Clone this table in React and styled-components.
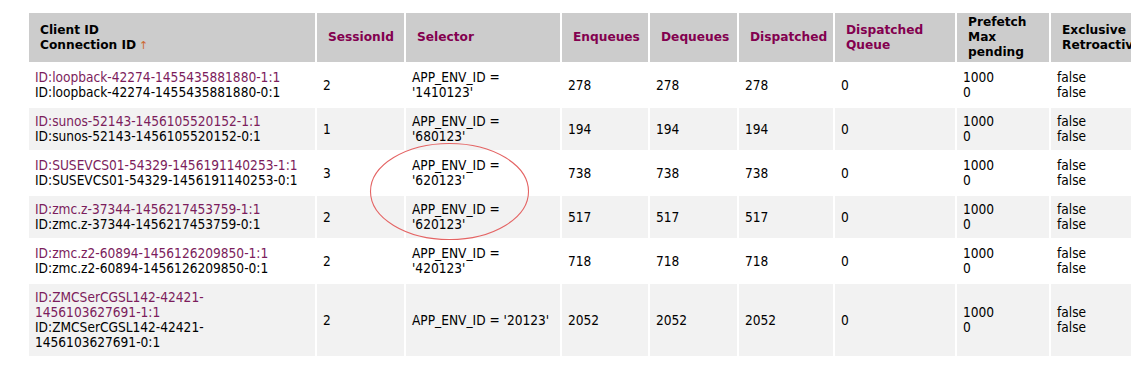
import React from 'react'
import styled, { createGlobalStyle } from 'styled-components'

const GlobalStyle = createGlobalStyle`
  html, body {
    margin: 0;
    padding: 0;
    background: #fff;
    overflow: hidden;
  }
`

const Page = styled.div`
  position: relative;
  padding: 11px 0 0 27px;
  font-family: 'DejaVu Sans Condensed', 'DejaVu Sans', sans-serif;
  font-size: 13.6px;
  color: #000;
`

const Table = styled.table`
  table-layout: fixed;
  width: ${p => p.$width}px;
  border-collapse: separate;
  border-spacing: 2px;
  margin: 0;
`

const Th = styled.th`
  background: #cccccc;
  text-align: left;
  vertical-align: middle;
  padding: 2px 4px 2px 11px;
  line-height: 15px;
  font-family: 'DejaVu Sans', sans-serif;
  font-size: 12.2px;
  font-weight: bold;
  color: ${p => (p.$sortable ? '#83004f' : '#000')};
  white-space: nowrap;
  overflow: hidden;
`

const SortArrow = styled.span`
  color: #cc6a33;
  font-weight: normal;
  font-size: 11px;
  margin-left: 3px;
`

const Row = styled.tr`
  background: ${p => (p.$odd ? '#f2f2f2' : '#fff')};
`

const Td = styled.td`
  padding: 6px 4px 6px 6px;
  line-height: 15px;
  vertical-align: middle;
  white-space: nowrap;
`

const Link = styled.span`
  color: #7c1d5c;
`

const Mark = styled.svg`
  position: absolute;
  left: 368px;
  top: 141px;
  pointer-events: none;
`

const columns = [
  { w: 286, label: ['Client ID', 'Connection ID'], sorted: true },
  { w: 87, label: ['SessionId'], sortable: true },
  { w: 154, label: ['Selector'], sortable: true },
  { w: 86, label: ['Enqueues'], sortable: true },
  { w: 87, label: ['Dequeues'], sortable: true },
  { w: 94, label: ['Dispatched'], sortable: true },
  { w: 120, label: ['Dispatched', 'Queue'], sortable: true },
  { w: 92, label: ['Prefetch', 'Max', 'pending'] },
  { w: 110, label: ['Exclusive', 'Retroactive'] },
]

const tableWidth = columns.reduce((s, c) => s + c.w, 0) + 2 * (columns.length + 1)

const rows = [
  { id: ['ID:loopback-42274-1455435881880-1:1'], conn: ['ID:loopback-42274-1455435881880-0:1'], session: 2, selector: ['APP_ENV_ID =', "'1410123'"], count: 278 },
  { id: ['ID:sunos-52143-1456105520152-1:1'], conn: ['ID:sunos-52143-1456105520152-0:1'], session: 1, selector: ['APP_ENV_ID =', "'680123'"], count: 194 },
  { id: ['ID:SUSEVCS01-54329-1456191140253-1:1'], conn: ['ID:SUSEVCS01-54329-1456191140253-0:1'], session: 3, selector: ['APP_ENV_ID =', "'620123'"], count: 738 },
  { id: ['ID:zmc.z-37344-1456217453759-1:1'], conn: ['ID:zmc.z-37344-1456217453759-0:1'], session: 2, selector: ['APP_ENV_ID =', "'620123'"], count: 517 },
  { id: ['ID:zmc.z2-60894-1456126209850-1:1'], conn: ['ID:zmc.z2-60894-1456126209850-0:1'], session: 2, selector: ['APP_ENV_ID =', "'420123'"], count: 718 },
  { id: ['ID:ZMCSerCGSL142-42421-', '1456103627691-1:1'], conn: ['ID:ZMCSerCGSL142-42421-', '1456103627691-0:1'], session: 2, selector: ["APP_ENV_ID = '20123'"], count: 2052 },
]

function Lines({ items }) {
  return items.map((t, i) => (
    <React.Fragment key={i}>
      {i > 0 && <br />}
      {t}
    </React.Fragment>
  ))
}

export default function App() {
  return (
    <Page>
      <GlobalStyle />
      <Table $width={tableWidth}>
        <colgroup>
          {columns.map((c, i) => <col key={i} style={{ width: c.w }} />)}
        </colgroup>
        <thead>
          <tr>
            {columns.map((c, i) => (
              <Th key={i} $sortable={c.sortable}>
                <Lines items={c.label} />
                {c.sorted && <SortArrow>↑</SortArrow>}
              </Th>
            ))}
          </tr>
        </thead>
        <tbody>
          {rows.map((r, i) => (
            <Row key={i} $odd={i % 2 === 1}>
              <Td>
                <Link><Lines items={r.id} /></Link>
                <br />
                <Lines items={r.conn} />
              </Td>
              <Td>{r.session}</Td>
              <Td><Lines items={r.selector} /></Td>
              <Td>{r.count}</Td>
              <Td>{r.count}</Td>
              <Td>{r.count}</Td>
              <Td>0</Td>
              <Td>1000<br />0</Td>
              <Td>false<br />false</Td>
            </Row>
          ))}
        </tbody>
      </Table>
      <Mark width="164" height="102" viewBox="0 0 164 102">
        <ellipse cx="81.5" cy="50.5" rx="79" ry="48" fill="none" stroke="#e46464" strokeWidth="1.1" />
      </Mark>
    </Page>
  )
}
